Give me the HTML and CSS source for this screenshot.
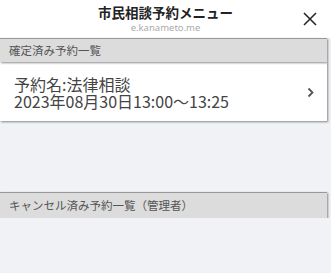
FILE: index.html
```html
<!DOCTYPE html>
<html lang="ja">
<head>
<meta charset="utf-8">
<link rel="stylesheet" href="styles.css">
</head>
<body>
<header class="top">
  <div class="titles">
    <div class="title">市民相談予約メニュー</div>
    <div class="sub">e.kanameto.me</div>
  </div>
  <svg class="close" width="14" height="14" viewBox="0 0 14 14"><path d="M1 1L13 13M13 1L1 13" stroke="#222" stroke-width="1.5" fill="none"/></svg>
</header>
<main class="content">
  <div class="bar">確定済み予約一覧</div>
  <div class="card">
    <div class="lines">
      <div class="line">予約名:法律相談</div>
      <div class="line">2023年08月30日13:00～13:25</div>
    </div>
    <svg class="chev" width="7" height="11" viewBox="0 0 7 11"><path d="M1.5 1.5L5.5 5.5L1.5 9.5" stroke="#555" stroke-width="1.8" fill="none"/></svg>
  </div>
  <div class="spacer"></div>
  <div class="bar bar2">キャンセル済み予約一覧（管理者）</div>
</main>
</body>
</html>
```
FILE: styles.css
```css
html, body {
  margin: 0;
  padding: 0;
  background: #f0f2f6;
  font-family: "Noto Sans CJK JP", "Noto Sans", sans-serif;
}
.top {
  height: 38px;
  background: #fff;
  display: flex;
  justify-content: center;
  align-items: flex-start;
  position: relative;
}
.titles {
  display: flex;
  flex-direction: column;
  align-items: center;
  padding-top: 3px;
}
.title {
  font-size: 13.5px;
  font-weight: bold;
  color: #222;
  line-height: 18px;
}
.sub {
  font-family: "Noto Sans", sans-serif;
  font-size: 9.5px;
  color: #aaa;
  line-height: 14px;
  margin-top: 0;
}
.close {
  position: absolute;
  right: 14px;
  top: 12px;
}
.content {
  width: 327px;
  display: flex;
  flex-direction: column;
}
.bar {
  height: 24px;
  box-sizing: border-box;
  background: #dcdcdc;
  border-top: 1px solid #999;
  box-shadow: 1px 1px 2px rgba(0,0,0,0.45);
  font-size: 11.5px;
  color: #555;
  line-height: 22px;
  padding-left: 9px;
  position: relative;
  z-index: 1;
}
.bar2 {
  height: 26px;
  line-height: 24px;
}
.card {
  height: 59px;
  background: #fff;
  box-shadow: 1px 1px 2px rgba(0,0,0,0.45);
  display: flex;
  align-items: center;
  justify-content: space-between;
  padding: 0 13px 0 14px;
}
.lines {
  font-size: 16px;
  color: #444;
  padding-top: 2px;
}
.line {
  line-height: 17px;
  height: 17px;
}
.chev {
  margin-top: 2px;
}
.spacer {
  height: 71px;
}
```
